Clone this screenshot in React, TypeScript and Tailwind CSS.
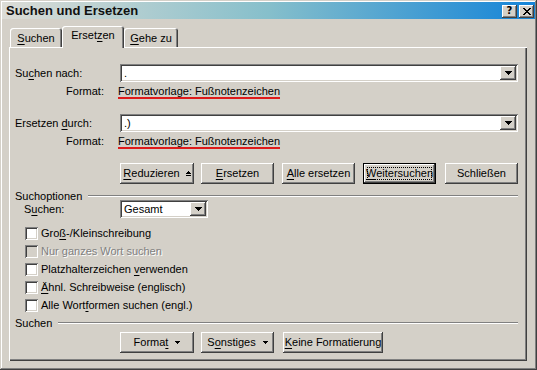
import React from "react";

const RAISED =
  "bg-[#d4d0c8] shadow-[inset_-1px_-1px_#404040,inset_1px_1px_#ffffff,inset_-2px_-2px_#808080,inset_2px_2px_#d4d0c8]";
const SUNKEN =
  "shadow-[inset_1px_1px_#808080,inset_-1px_-1px_#ffffff,inset_2px_2px_#404040,inset_-2px_-2px_#d4d0c8]";

function U({ children }: { children: React.ReactNode }) {
  return <span className="underline underline-offset-[2px] decoration-[1px]">{children}</span>;
}

function DownArrow() {
  return (
    <svg width="7" height="4" viewBox="0 0 7 4" shapeRendering="crispEdges">
      <path d="M0 0h7v1h-1v1h-1v1h-1v1h-1v-1h-1v-1h-1v-1h-1z" fill="#000" />
    </svg>
  );
}

function SmallDown() {
  return (
    <svg width="5" height="3" viewBox="0 0 5 3" shapeRendering="crispEdges">
      <path d="M0 0h5v1h-1v1h-1v1h-1v-1h-1v-1h-1z" fill="#000" />
    </svg>
  );
}

function UpBar() {
  return (
    <svg width="5" height="6" viewBox="0 0 5 6" shapeRendering="crispEdges">
      <path d="M2 0h1v1h1v1h1v1h-5v-1h1v-1h1z M0 4h5v1h-5z" fill="#000" />
    </svg>
  );
}

function DropBtn() {
  return (
    <div className={`w-[16px] h-[14px] flex items-center justify-center shrink-0 ${RAISED}`}>
      <DownArrow />
    </div>
  );
}

function Combo({ value }: { value: string }) {
  return (
    <div className={`flex-1 h-[18px] bg-white flex items-center pl-[4px] pr-[2px] ${SUNKEN}`}>
      <span className="flex-1">{value}</span>
      <DropBtn />
    </div>
  );
}

function Btn({
  w,
  ml,
  def,
  children,
}: {
  w: string;
  ml: string;
  def?: boolean;
  children: React.ReactNode;
}) {
  if (def) {
    return (
      <div
        className={`${w} ${ml} h-[21px] relative flex items-center justify-center bg-[#d4d0c8] shadow-[inset_0_0_0_1px_#000000,inset_-2px_-2px_#404040,inset_2px_2px_#ffffff,inset_-3px_-3px_#808080]`}
      >
        <div className="absolute inset-[4px] border border-dotted border-black" />
        <span>{children}</span>
      </div>
    );
  }
  return (
    <div className={`${w} ${ml} h-[21px] flex items-center justify-center ${RAISED}`}>
      {children}
    </div>
  );
}

function Sep({ label }: { label: string }) {
  return (
    <div className="flex items-center h-[10px]">
      <span>{label}</span>
      <div className="flex-1 ml-[6px] h-0 border-t border-b border-t-[#808080] border-b-white" />
    </div>
  );
}

function Check({ children, disabled }: { children: React.ReactNode; disabled?: boolean }) {
  return (
    <div className="flex items-center h-[18px] pl-[10px]">
      <div
        className={`w-[13px] h-[13px] shrink-0 ${disabled ? "bg-[#d4d0c8]" : "bg-white"} ${SUNKEN}`}
      />
      <span
        className={`ml-[3px] ${disabled ? "text-[#808080] [text-shadow:1px_1px_0_#ffffff]" : ""}`}
      >
        {children}
      </span>
    </div>
  );
}

function Tab({
  selected,
  w,
  children,
}: {
  selected?: boolean;
  w: string;
  children: React.ReactNode;
}) {
  if (selected) {
    return (
      <div
        className={`${w} h-[22px] relative z-10 bg-[#d4d0c8] rounded-t-[3px] flex items-center justify-center pb-[3px] shadow-[inset_1px_1px_#ffffff,inset_-1px_0_#404040,inset_-2px_0_#808080]`}
      >
        {children}
      </div>
    );
  }
  return (
    <div
      className={`${w} h-[19px] mb-[1px] bg-[#d4d0c8] rounded-t-[3px] flex items-center justify-center pt-[1px] shadow-[inset_1px_1px_#ffffff,inset_-1px_0_#404040,inset_-2px_0_#808080]`}
    >
      {children}
    </div>
  );
}

export default function App() {
  return (
    <div className="w-[537px] h-[370px] bg-[#d4d0c8] font-['Liberation_Sans',Arial,sans-serif] text-[11px] text-black leading-none select-none shadow-[inset_-1px_-1px_#404040,inset_1px_1px_#d4d0c8,inset_-2px_-2px_#808080,inset_2px_2px_#ffffff] pt-[2px] px-[2px] flex flex-col">
      {/* Title bar */}
      <div className="h-[17px] flex items-center justify-between bg-[linear-gradient(to_right,#dcdcd6,#86bfcb_50%,#1484d8)] pl-[4px] pr-[1px]">
        <span className="font-bold text-[13px] text-[#101010]">Suchen und Ersetzen</span>
        <div className="flex gap-[2px] pt-[1px]">
          <div className={`w-[15px] h-[13px] flex items-center justify-center ${RAISED}`}>
            <span className="font-bold text-[10px] leading-none font-['DejaVu_Sans',sans-serif]">?</span>
          </div>
          <div className={`w-[15px] h-[13px] flex items-center justify-center ${RAISED}`}>
            <svg width="8" height="7" viewBox="0 0 8 7" shapeRendering="crispEdges">
              <path
                d="M0 0h2v1h1v1h2v-1h1v-1h2v1h-1v1h-1v1h-1v1h1v1h1v1h1v1h-2v-1h-1v-1h-2v1h-1v1h-2v-1h1v-1h1v-1h1v-1h-1v-1h-1v-1h-1z"
                fill="#000"
              />
            </svg>
          </div>
        </div>
      </div>

      <div className="pl-[7px] mt-[7px] flex flex-col">
        {/* Tabs */}
        <div className="h-[22px] flex items-end pl-[1px]">
          <Tab w="w-[52px]">
            <span>
              <U>S</U>uchen
            </span>
          </Tab>
          <Tab w="w-[62px]" selected>
            <span>
              Erset<U>z</U>en
            </span>
          </Tab>
          <Tab w="w-[54px]">
            <span>
              <U>G</U>ehe zu
            </span>
          </Tab>
        </div>

        {/* Panel */}
        <div className="w-[518px] h-[314px] mt-[-1px] bg-[#d4d0c8] shadow-[inset_1px_1px_#ffffff,inset_-1px_-1px_#404040,inset_-2px_-2px_#808080] pl-[6px] pr-[9px] flex flex-col">
          <div className="flex items-center h-[18px] mt-[17px]">
            <div className="w-[105px]">
              Su<U>c</U>hen nach:
            </div>
            <Combo value="." />
          </div>
          <div className="flex mt-[3px]">
            <div className="w-[105px] text-right pr-[16px] leading-[12px]">Format:</div>
            <span className="ml-[-2px] border-b-2 border-[#dd1a1a] leading-[12px]">
              Formatvorlage: Fußnotenzeichen
            </span>
          </div>

          <div className="flex items-center h-[18px] mt-[15px]">
            <div className="w-[105px]">
              Ersetzen <U>d</U>urch:
            </div>
            <Combo value=".)" />
          </div>
          <div className="flex mt-[3px]">
            <div className="w-[105px] text-right pr-[16px] leading-[12px]">Format:</div>
            <span className="ml-[-2px] border-b-2 border-[#dd1a1a] leading-[12px]">
              Formatvorlage: Fußnotenzeichen
            </span>
          </div>

          <div className="flex mt-[14px] pl-[105px]">
            <Btn w="w-[74px]" ml="ml-0">
              <span>
                <U>R</U>eduzieren
              </span>
              <span className="ml-[6px] flex">
                <UpBar />
              </span>
            </Btn>
            <Btn w="w-[73px]" ml="ml-[7px]">
              <span>
                <U>E</U>rsetzen
              </span>
            </Btn>
            <Btn w="w-[73px]" ml="ml-[8px]">
              <span>
                <U>A</U>lle ersetzen
              </span>
            </Btn>
            <Btn w="w-[73px]" ml="ml-[8px]" def>
              <U>W</U>eitersuchen
            </Btn>
            <Btn w="w-[73px]" ml="ml-[9px]">
              <span>Schließen</span>
            </Btn>
          </div>

          <div className="mt-[7px]">
            <Sep label="Suchoptionen" />
          </div>

          <div className="flex items-center h-[18px] mt-[-1px]">
            <div className="w-[105px] pl-[9px]">
              S<U>u</U>chen:
            </div>
            <div className={`w-[88px] h-[18px] bg-white flex items-center pl-[4px] pr-[2px] ${SUNKEN}`}>
              <span className="flex-1">Gesamt</span>
              <DropBtn />
            </div>
          </div>

          <div className="flex flex-col mt-[6px]">
            <Check>
              Gro<U>ß</U>-/Kleinschreibung
            </Check>
            <Check disabled>Nur ganzes Wort suchen</Check>
            <Check>
              Platzhalterzeichen <U>v</U>erwenden
            </Check>
            <Check>
              <U>Ä</U>hnl. Schreibweise (englisch)
            </Check>
            <Check>
              Alle Wort<U>f</U>ormen suchen (engl.)
            </Check>
          </div>

          <div className="mt-[4px]">
            <Sep label="Suchen" />
          </div>

          <div className="flex mt-[4px] pl-[105px]">
            <Btn w="w-[74px]" ml="ml-0">
              <span>
                Forma<U>t</U>
              </span>
              <span className="ml-[7px] flex">
                <SmallDown />
              </span>
            </Btn>
            <Btn w="w-[73px]" ml="ml-[7px]">
              <span>
                S<U>o</U>nstiges
              </span>
              <span className="ml-[7px] flex">
                <SmallDown />
              </span>
            </Btn>
            <Btn w="w-[100px]" ml="ml-[9px]">
              <span>
                <U>K</U>eine Formatierung
              </span>
            </Btn>
          </div>
        </div>
      </div>
    </div>
  );
}
